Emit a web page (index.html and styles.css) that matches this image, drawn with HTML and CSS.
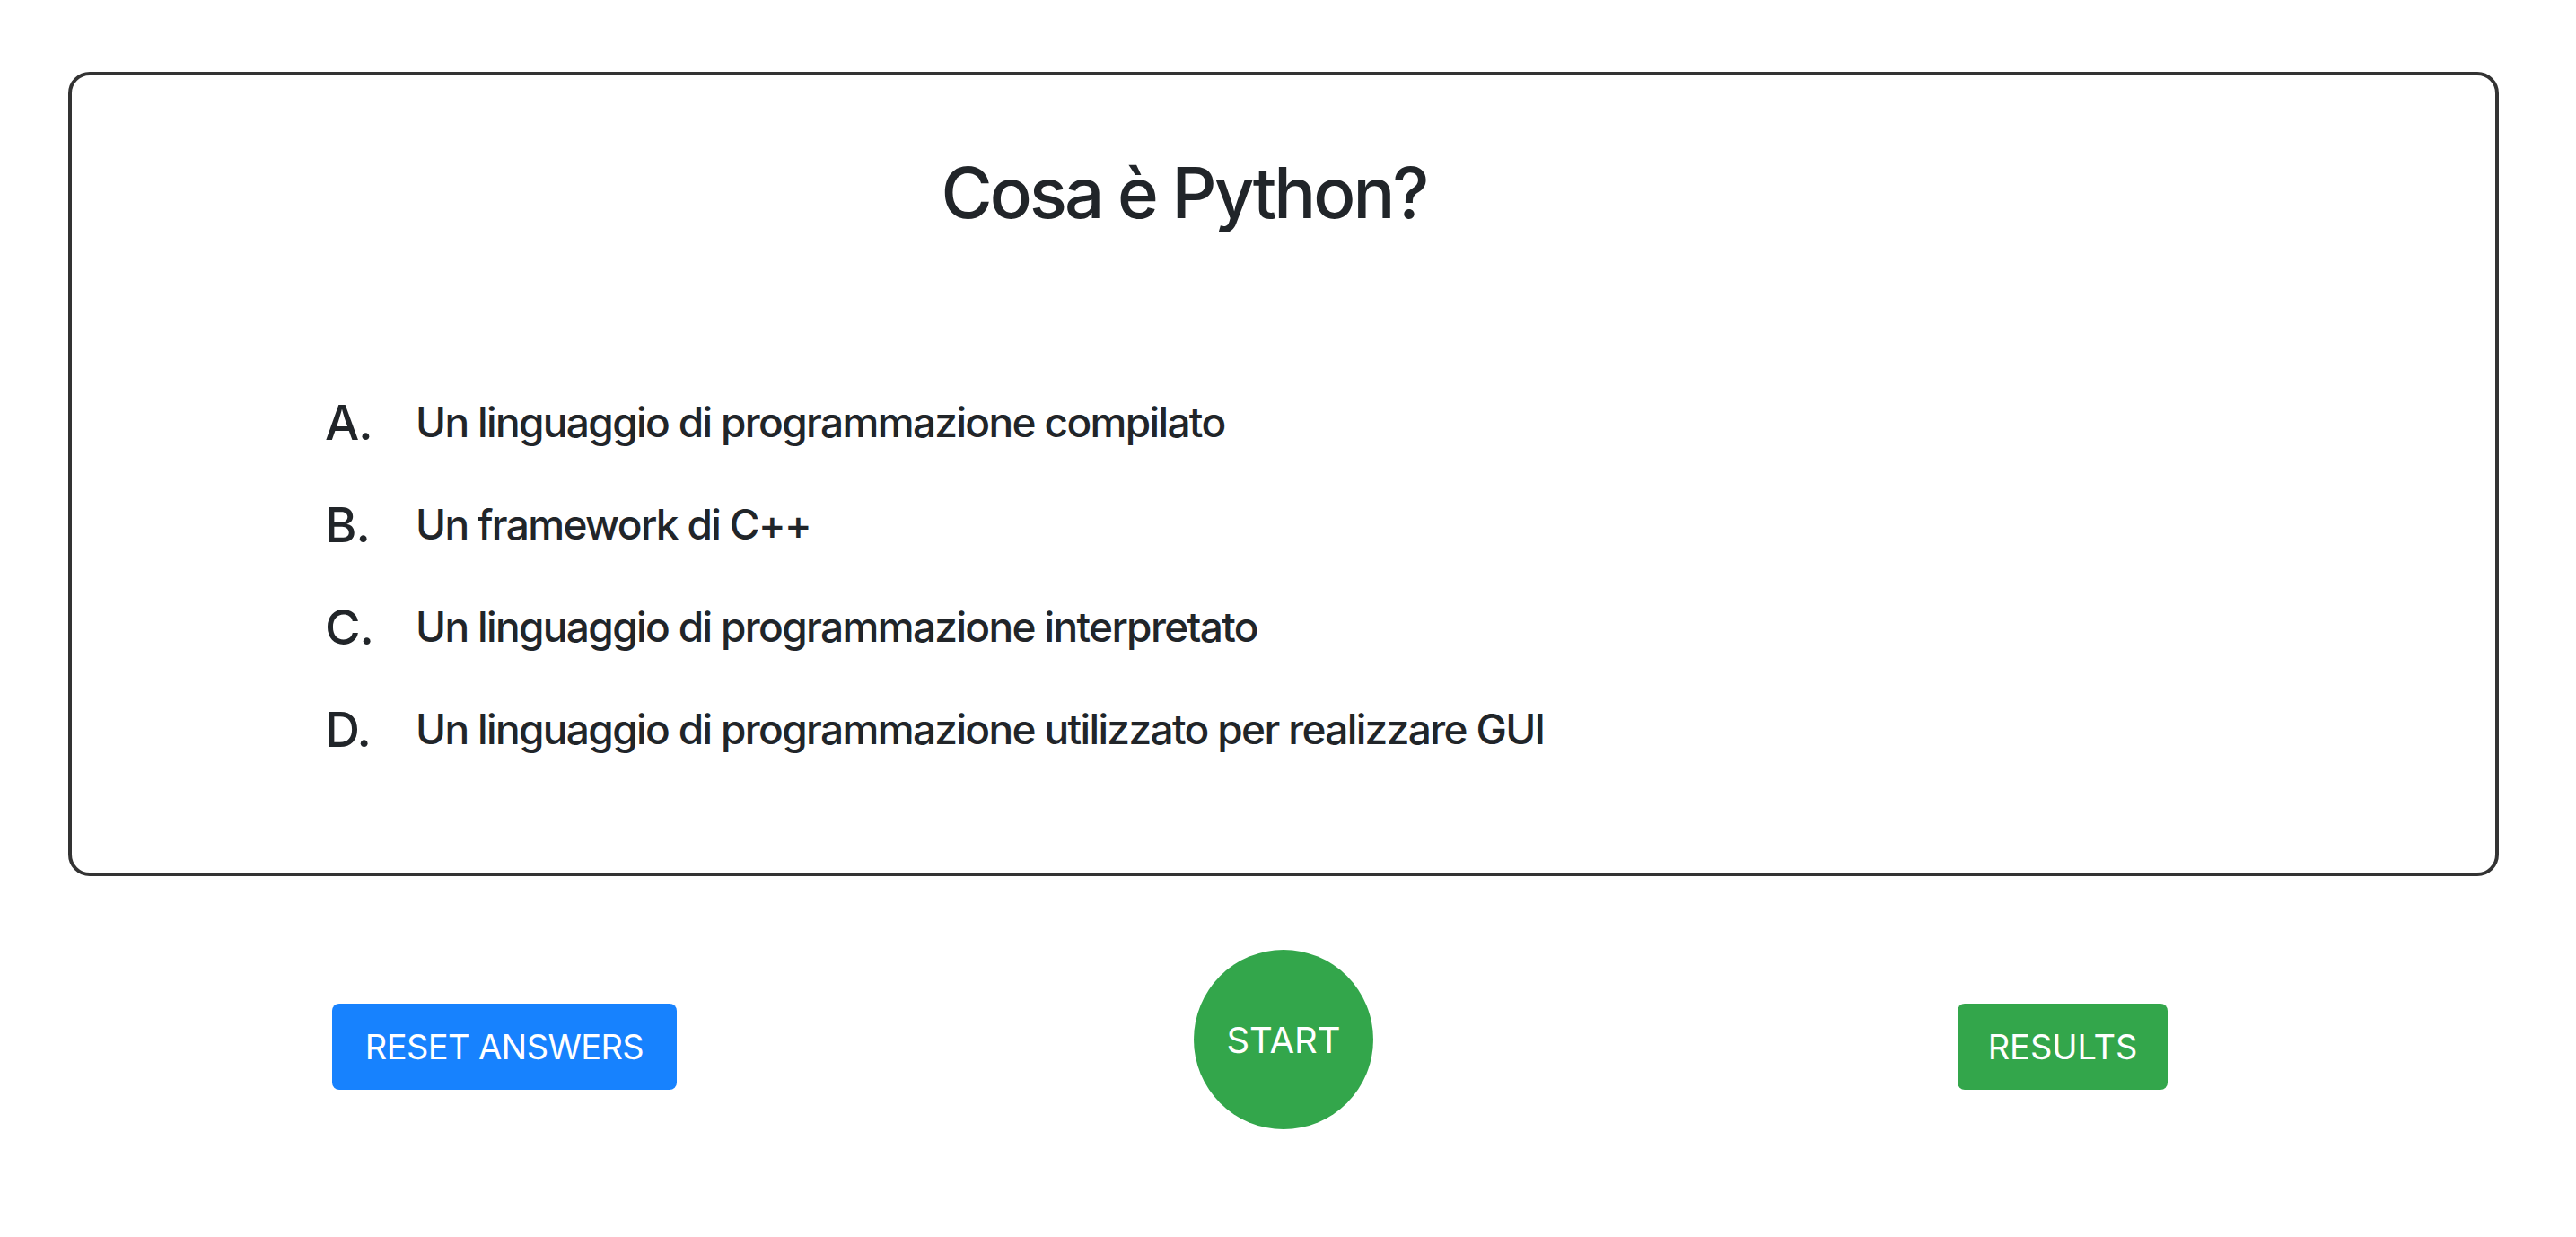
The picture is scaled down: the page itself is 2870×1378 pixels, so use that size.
FILE: index.html
```html
<!DOCTYPE html>
<html lang="it">
<head>
<meta charset="utf-8">
<title>Quiz</title>
<link rel="stylesheet" href="styles.css">
</head>
<body>
<div class="quiz-card">
  <h1 class="question">Cosa è Python?</h1>
  <ul class="answers">
    <li class="answer"><span class="letter">A.</span><span class="text">Un linguaggio di programmazione compilato</span></li>
    <li class="answer"><span class="letter">B.</span><span class="text">Un framework di C++</span></li>
    <li class="answer"><span class="letter">C.</span><span class="text">Un linguaggio di programmazione interpretato</span></li>
    <li class="answer"><span class="letter">D.</span><span class="text">Un linguaggio di programmazione utilizzato per realizzare GUI</span></li>
  </ul>
</div>
<div class="controls">
  <div class="cell"><button class="btn btn-blue">RESET ANSWERS</button></div>
  <div class="cell"><button class="btn-start">START</button></div>
  <div class="cell"><button class="btn btn-green">RESULTS</button></div>
</div>
</body>
</html>
```
FILE: styles.css
```css
html, body {
  margin: 0;
  padding: 0;
  background: #ffffff;
}
body {
  font-family: Inter, "Noto Sans", "Liberation Sans", sans-serif;
  color: #212529;
}
.quiz-card {
  margin: 80px 86px 0 76px;
  height: 888px;
  border: 4px solid #333333;
  border-radius: 24px;
  box-sizing: content-box;
}
.question {
  margin: 0;
  padding: 83px 222px 0 0;
  font-size: 78px;
  font-weight: 500;
  line-height: 96px;
  text-align: center;
  letter-spacing: -3px;
}
.answers {
  list-style: none;
  margin: 0;
  padding: 178px 0 0 282px;
  display: flex;
  flex-direction: column;
  gap: 56px;
}
.answer {
  display: flex;
  align-items: center;
  height: 58px;
}
.letter {
  width: 101px;
  font-size: 54px;
  font-weight: 500;
  letter-spacing: -1px;
  flex: none;
}
.text {
  font-size: 46px;
  font-weight: 500;
  letter-spacing: -1.65px;
}
.controls {
  margin: 82px 138px 0 128px;
  display: grid;
  grid-template-columns: 1fr 1fr 1fr;
  align-items: start;
}
.cell {
  display: flex;
  justify-content: center;
}
.btn {
  margin-top: 60px;
  height: 96px;
  padding: 0;
  border: 0;
  border-radius: 8px;
  font-family: Inter, "Noto Sans", "Liberation Sans", sans-serif;
  font-size: 38px;
  font-weight: 400;
  color: #ffffff;
  white-space: nowrap;
}
.btn-blue {
  background: #1782fe;
  width: 384px;
  letter-spacing: -0.6px;
}
.btn-green {
  background: #33a64b;
  width: 234px;
}
.btn-start {
  width: 200px;
  height: 200px;
  border: 0;
  border-radius: 50%;
  background: #33a64b;
  color: #ffffff;
  font-family: Inter, "Noto Sans", "Liberation Sans", sans-serif;
  font-size: 40px;
  padding: 0;
}
```
